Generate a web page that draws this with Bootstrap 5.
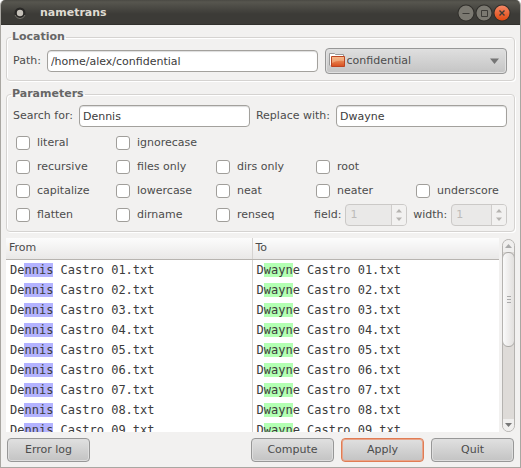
<!DOCTYPE html>
<html lang="en">
<head>
<meta charset="utf-8">
<meta name="viewport" content="width=device-width, initial-scale=1">
<title>nametrans</title>
<link href="https://cdn.jsdelivr.net/npm/bootstrap@5.3.0/dist/css/bootstrap.min.css" rel="stylesheet">
<style>
body{font:11px/14px "DejaVu Sans",sans-serif;color:#4c4c4c;background:#fff}
.window{background:#f2f1f0;border:solid #a9a7a2;border-width:0 1px 1px;border-radius:5px 5px 0 0;overflow:hidden}
.titlebar{height:25px;background:linear-gradient(#4a4944,#57564f 2px,#3c3b37 14px,#3c3b37);border-bottom:1px solid #32312d;color:#dfdbd2;margin:0 -1px;padding:1px 10px 0 14px}
.titlebar h1{font-size:11px;line-height:14px;font-weight:bold;margin-left:14px}
.titlebar svg{display:block}
.titlebar button,.spin button,.bar button{border:0;padding:0;background:none;line-height:0}
.content{padding:5px}
.group{border:1px solid #d5d3d1;border-radius:4px;box-shadow:inset 1px 1px #fff,1px 1px #fff;min-width:0}
.group.location{padding-bottom:6px}
.group.parameters{margin-top:6px;padding-bottom:4px}
.group legend{font-size:11px;line-height:14px;font-weight:bold;color:#666;float:none;width:auto;margin:0 0 0 4px;padding:0 1px}
.rowline{padding:0 7px 0 6px}
.entry{height:22px;font-size:11px;line-height:14px;padding:0 3px;border:1px solid #a3a19d;border-radius:4px;color:#3c3c3c;background:#fff;min-width:0;box-shadow:inset 0 1px 1px #ddd}
.folder{height:26px;font-size:11px;line-height:14px;padding:0 22px 0 21px;border:1px solid #979797;border-radius:4px;color:#4c4c4c;
background:url("data:image/svg+xml,%3Csvg xmlns='http://www.w3.org/2000/svg' width='9' height='6'%3E%3Cpath d='M0 .5h9L4.5 6z' fill='%23757575'/%3E%3C/svg%3E") no-repeat right 7px center,linear-gradient(#dfdfdf,#c4c4c4);box-shadow:inset 0 0 0 1px #e0e0e0}
.folder-icon{left:4px;top:4px;pointer-events:none}
.path-part{flex:262 1 0}
.folder-part{flex:182 1 0;margin-left:7px}
.label-gap{margin-right:6px}
.label-next{margin-left:6px}
.options{display:grid;grid-template-columns:repeat(5,minmax(0,1fr));grid-auto-rows:24px;padding-left:7px}
.options .form-check-input{width:14px;height:14px;margin:0 7px 0 2px;border:1px solid #a09e9a;border-radius:3px;background-color:#fff;float:none;flex-shrink:0}
.options label{white-space:nowrap}
.numbers{grid-column:4 / span 2;padding-right:7px}
.numbers label{margin-right:4px}
.spin{height:22px;border:1px solid #cbc9c7;border-radius:4px;background:#eae9e8;overflow:hidden}
.spin input{border:0;background:none;padding:0 4px;color:#bdbbb9;width:46px;border-right:1px solid #cfcdcb}
.spin.wide{margin-right:6px}
.spin.narrow input{width:40px}
.spin .arrows{width:14px;background:#f2f1f0}
.list-area{margin-top:6px}
.listing{background:#fff;min-width:0}
.listing table{table-layout:fixed;margin:0;font-size:11px;line-height:14px;color:#3c3c3c;width:100%}
.listing th{height:21px;font-weight:normal;padding:0 3px;background:linear-gradient(#fcfcfc,#e9e8e7);border-bottom:1px solid #b7b4b0;color:#4c4c4c}
.listing th:first-child,.listing td:first-child{width:246px;border-right:1px solid #d5d3d1}
.listing td{height:20px;padding:2px 4px 0;font-family:"DejaVu Sans Mono",monospace;font-size:12px;white-space:pre}
.from{background:#b3b3ff}.to{background:#b3ffb3}
.bar{width:13px;margin:1px 0 0 3px;border:1px solid #b5b3b0;border-radius:7px;background:#dedbd8;overflow:hidden}
.bar button{height:12px;width:100%;background:#f0efee}
.bar button svg{display:block;margin:auto}
.thumb{height:95px;width:13px;margin:0 -1px;border:1px solid #aaa8a5;border-radius:6px;background:linear-gradient(90deg,#fafafa,#e2e0de)}
.actions{gap:7px;padding:6px 1px 0}
.act{width:83px;height:24px;font-size:11px;line-height:14px;padding:0;color:#4c4c4c;border:1px solid #979797;border-radius:4px;background:linear-gradient(#e0e0e0,#c3c3c3);box-shadow:inset 0 0 0 1px #dedede}
.act.default{border-color:#e07c54;box-shadow:inset 0 0 0 1px #e8a58b}
</style>
</head>
<body>
<div class="window vh-100 d-flex flex-column">
<header class="titlebar d-flex align-items-center flex-shrink-0">
<svg width="12" height="12" aria-hidden="true"><circle cx="6" cy="6" r="5.500" fill="#292826"/><path d="M1 8a5.300 5.300 0 0 0 10 0" fill="none" stroke="#77756e"/><circle cx="6" cy="6" r="3.200" fill="#c5c1b9"/></svg>
<h1 class="mb-0 me-auto">nametrans</h1>
<div class="d-flex">
<button aria-label="Minimize"><svg width="18" height="18"><circle cx="9" cy="9" r="8.500" fill="#302f2b"/><circle cx="9" cy="9" r="7.500" fill="#7b7971"/><path d="M5.500 9.500h7" stroke="#3c3b37"/></svg></button>
<button aria-label="Maximize"><svg width="18" height="18"><circle cx="9" cy="9" r="8.500" fill="#302f2b"/><circle cx="9" cy="9" r="7.500" fill="#7b7971"/><path d="M6.500 6.500h6v6h-6z" fill="none" stroke="#3c3b37"/></svg></button>
<button aria-label="Close"><svg width="18" height="18"><defs><linearGradient id="c" x2="0" y2="1"><stop stop-color="#f58765"/><stop offset="1" stop-color="#df4911"/></linearGradient></defs><circle cx="9" cy="9" r="8.500" fill="#302f2b"/><circle cx="9" cy="9" r="7.500" fill="url(#c)"/><path d="M6.500 6.500l5 5m0-5l-5 5" stroke="#3c3b37" stroke-width="1.400"/></svg></button>
</div>
</header>
<main class="content d-flex flex-column flex-grow-1 overflow-hidden">
<fieldset class="group location flex-shrink-0">
<legend>Location</legend>
<div class="rowline d-flex align-items-center pt-1">
<label class="label-gap" for="path">Path:</label>
<input id="path" class="entry path-part" value="/home/alex/confidential">
<div class="folder-part position-relative">
<select class="folder form-select" aria-label="Folder"><option>confidential</option></select>
<svg class="folder-icon position-absolute" width="17" height="17" aria-hidden="true"><defs><linearGradient id="f" x2="0" y2="1"><stop stop-color="#f3ad76"/><stop offset="1" stop-color="#d84d1e"/></linearGradient></defs><path d="M.5 13.500V1.500h5l1 1h8v4" fill="#fff" stroke="#999"/><path d="M2.500 4.500h13v10h-13z" fill="url(#f)" stroke="#bc4623"/><path d="M3 5h12v4Q8 8 3 11z" fill="#f7c69d" opacity=".5"/></svg>
</div>
</div>
</fieldset>
<fieldset class="group parameters flex-shrink-0">
<legend>Parameters</legend>
<div class="rowline d-flex align-items-center pt-1 mb-1">
<label class="label-gap" for="search">Search for:</label>
<input id="search" class="entry flex-fill w-25" value="Dennis">
<label class="label-gap label-next" for="replace">Replace with:</label>
<input id="replace" class="entry flex-fill w-25" value="Dwayne">
</div>
<div class="options" id="options"></div>
</fieldset>
<div class="d-flex flex-grow-1 overflow-hidden list-area">
<div class="listing flex-grow-1 overflow-hidden">
<table><thead><tr><th scope="col">From</th><th scope="col">To</th></tr></thead><tbody id="files"></tbody></table>
</div>
<div class="bar d-flex flex-column flex-shrink-0">
<button class="flex-shrink-0" aria-label="Scroll up"><svg width="7" height="4"><path d="M0 4L3.500 0 7 4z" fill="#aaa"/></svg></button>
<div class="thumb d-flex align-items-center justify-content-center flex-shrink-0"><svg width="4" height="8"><path d="M0 .5h4m-4 3h4m-4 3h4" stroke="#aaa"/></svg></div>
<button class="mt-auto flex-shrink-0" aria-label="Scroll down"><svg width="7" height="4"><path d="M0 0h7L3.500 4z" fill="#777"/></svg></button>
</div>
</div>
<footer class="d-flex flex-shrink-0 actions">
<button class="act me-auto">Error log</button>
<button class="act">Compute</button>
<button class="act default">Apply</button>
<button class="act">Quit</button>
</footer>
</main>
</div>
<script>
const rows=[["literal","ignorecase","","",""],["recursive","files only","dirs only","root",""],["capitalize","lowercase","neat","neater","underscore"],["flatten","dirname","renseq"]];
const spin=(name,cls)=>`<label for="${name}">${name}:</label><div class="spin ${cls} d-flex"><input id="${name}" value="1" disabled><div class="arrows d-flex flex-column justify-content-center align-items-center gap-1"><button disabled aria-label="Increase ${name}"><svg width="6" height="4"><path d="M0 3.500L3 0l3 3.500z" fill="#b5b3b0"/></svg></button><button disabled aria-label="Decrease ${name}"><svg width="6" height="4"><path d="M0 .5h6L3 4z" fill="#b5b3b0"/></svg></button></div></div>`;
document.getElementById("options").innerHTML=rows.flat().map(n=>{const id=n.replace(" ","-");return n?`<div class="d-flex align-items-center"><input class="form-check-input" type="checkbox" id="${id}"><label for="${id}">${n}</label></div>`:"<div></div>"}).join("")+`<div class="numbers d-flex align-items-center justify-content-end">${spin("field","wide")}${spin("width","narrow")}</div>`;
document.getElementById("files").innerHTML=Array.from({length:9},(_,i)=>{const t=` Castro ${String(i+1).padStart(2,"0")}.txt`;return `<tr><td>De<span class="from">nnis</span>${t}</td><td>D<span class="to">wayn</span>e${t}</td></tr>`}).join("");
</script>
<script src="https://cdn.jsdelivr.net/npm/bootstrap@5.3.0/dist/js/bootstrap.bundle.min.js"></script>
</body>
</html>
